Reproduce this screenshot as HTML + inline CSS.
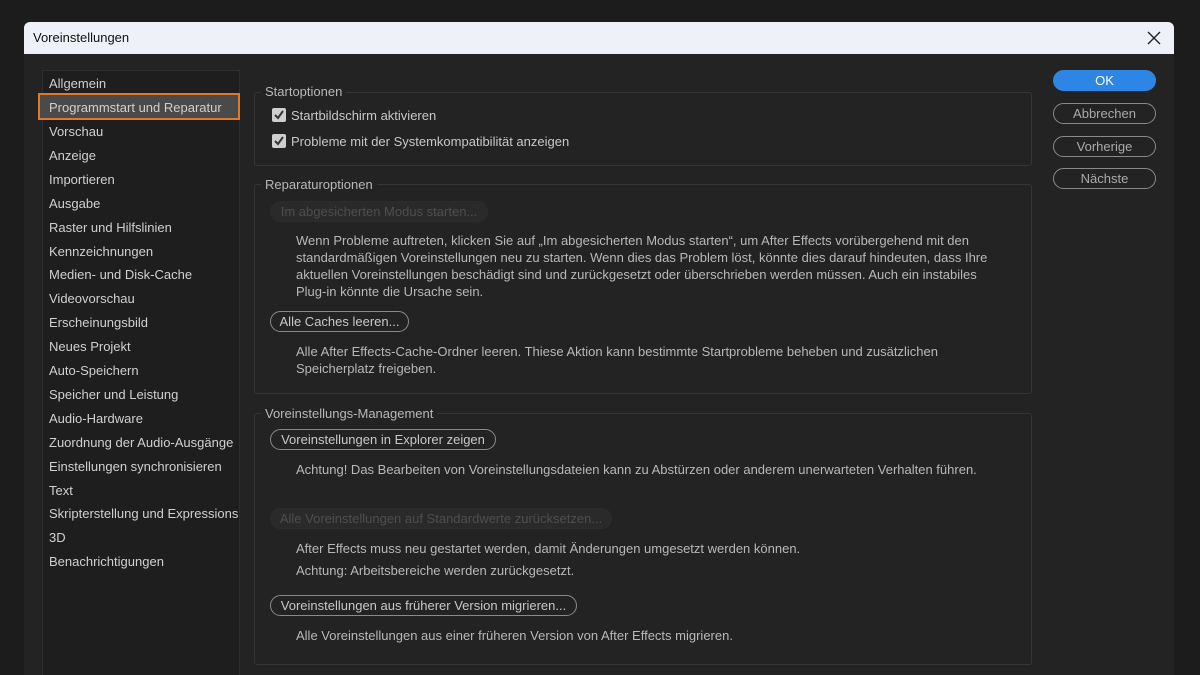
<!DOCTYPE html><html style="width:1200px;height:675px;overflow:hidden"><head><style>
body{margin:0;width:1200px;height:675px;background:#1c1c1c;font-family:"Liberation Sans",sans-serif;font-size:13px;color:#c8c8c8;overflow:hidden;position:relative}
.dlg{position:absolute;left:24px;top:22px;width:1150px;height:653px;background:#232323;border-radius:6px 6px 0 0;overflow:hidden}
.tb{position:absolute;left:0;top:0;width:1150px;height:32px;background:#eef2f8;color:#111;font-size:13px}
.a{position:absolute;white-space:nowrap}
.list{position:absolute;left:42px;top:70px;width:196px;height:605px;background:#1e1e1e;border:1px solid #2e2e2e;border-bottom:none}
.it{position:absolute;left:49px;font-size:13px;color:#d0d0d0}
.grp{position:absolute;left:254px;width:776px;border:1px solid #353535;border-radius:3px}
.gl{position:absolute;font-size:13px;color:#b8b8b8;background:#232323;padding:0 4px}
.btn{position:absolute;height:19px;border:1.5px solid #8a8a8a;border-radius:11px;color:#c8c8c8;font-size:13px;line-height:19px;text-align:center;box-sizing:content-box}
.dis{border-color:#2c2c2c;background:#2a2a2a;color:#4e4e4e}
.txt{position:absolute;left:296px;color:#b8b8b8;font-size:13px;line-height:17px}
.rb{position:absolute;left:1053px;width:101px;height:19px;border:1.5px solid #8a8a8a;border-radius:11px;text-align:center;line-height:19px;color:#aaa}
.cb{position:absolute;left:272px;width:14px;height:14px;background:#cfcfcf;border-radius:2px}
</style></head><body>
<div class="dlg"><div class="tb"><span class="a" style="left:9px;top:8px">Voreinstellungen</span>
<svg class="a" style="left:1123px;top:9px" width="14" height="14"><path d="M1 1L13 13M13 1L1 13" stroke="#222" stroke-width="1.4"/></svg></div></div>
<div class="list"></div>
<div class="a" style="top:93px;height:27px;background:#4a4a4a;border:2px solid #e07a2a;box-sizing:border-box;left:38px;width:202px"></div>
<div class="it" style="top:76px">Allgemein</div>
<div class="it" style="top:100px">Programmstart und Reparatur</div>
<div class="it" style="top:124px">Vorschau</div>
<div class="it" style="top:148px">Anzeige</div>
<div class="it" style="top:172px">Importieren</div>
<div class="it" style="top:196px">Ausgabe</div>
<div class="it" style="top:220px">Raster und Hilfslinien</div>
<div class="it" style="top:244px">Kennzeichnungen</div>
<div class="it" style="top:267px">Medien- und Disk-Cache</div>
<div class="it" style="top:291px">Videovorschau</div>
<div class="it" style="top:315px">Erscheinungsbild</div>
<div class="it" style="top:339px">Neues Projekt</div>
<div class="it" style="top:363px">Auto-Speichern</div>
<div class="it" style="top:387px">Speicher und Leistung</div>
<div class="it" style="top:411px">Audio-Hardware</div>
<div class="it" style="top:435px">Zuordnung der Audio-Ausgänge</div>
<div class="it" style="top:459px">Einstellungen synchronisieren</div>
<div class="it" style="top:483px">Text</div>
<div class="it" style="top:506px">Skripterstellung und Expressions</div>
<div class="it" style="top:530px">3D</div>
<div class="it" style="top:554px">Benachrichtigungen</div>

<div class="grp" style="top:92px;height:72px"></div><div class="gl" style="left:261px;top:84px">Startoptionen</div>
<div class="cb" style="top:108px"></div><svg class="a" style="left:273px;top:109px" width="12" height="12"><path d="M2 6L5 9L10 2" stroke="#333" stroke-width="2" fill="none"/></svg><span class="a" style="left:291px;top:108px">Startbildschirm aktivieren</span>
<div class="cb" style="top:134px"></div><svg class="a" style="left:273px;top:135px" width="12" height="12"><path d="M2 6L5 9L10 2" stroke="#333" stroke-width="2" fill="none"/></svg><span class="a" style="left:291px;top:134px">Probleme mit der Systemkompatibilität anzeigen</span>

<div class="grp" style="top:184px;height:208px"></div><div class="gl" style="left:261px;top:177px">Reparaturoptionen</div>
<div class="btn dis" style="left:270px;top:201px;width:216px">Im abgesicherten Modus starten...</div>
<div class="txt" style="top:232px">Wenn Probleme auftreten, klicken Sie auf „Im abgesicherten Modus starten“, um After Effects vorübergehend mit den<br>standardmäßigen Voreinstellungen neu zu starten. Wenn dies das Problem löst, könnte dies darauf hindeuten, dass Ihre<br>aktuellen Voreinstellungen beschädigt sind und zurückgesetzt oder überschrieben werden müssen. Auch ein instabiles<br>Plug-in könnte die Ursache sein.</div>
<div class="btn" style="left:270px;top:311px;width:137px">Alle Caches leeren...</div>
<div class="txt" style="top:343px">Alle After Effects-Cache-Ordner leeren. Thiese Aktion kann bestimmte Startprobleme beheben und zusätzlichen<br>Speicherplatz freigeben.</div>

<div class="grp" style="top:413px;height:250px"></div><div class="gl" style="left:261px;top:406px">Voreinstellungs-Management</div>
<div class="btn" style="left:270px;top:429px;width:224px">Voreinstellungen in Explorer zeigen</div>
<div class="txt" style="top:461px">Achtung! Das Bearbeiten von Voreinstellungsdateien kann zu Abstürzen oder anderem unerwarteten Verhalten führen.</div>
<div class="btn dis" style="left:270px;top:508px;width:340px">Alle Voreinstellungen auf Standardwerte zurücksetzen...</div>
<div class="txt" style="top:540px">After Effects muss neu gestartet werden, damit Änderungen umgesetzt werden können.</div>
<div class="txt" style="top:562px">Achtung: Arbeitsbereiche werden zurückgesetzt.</div>
<div class="btn" style="left:270px;top:595px;width:305px">Voreinstellungen aus früherer Version migrieren...</div>
<div class="txt" style="top:627px">Alle Voreinstellungen aus einer früheren Version von After Effects migrieren.</div>

<div class="rb" style="top:70px;background:#2d86e6;border-color:#2d86e6;color:#fff">OK</div>
<div class="rb" style="top:103px">Abbrechen</div>
<div class="rb" style="top:136px">Vorherige</div>
<div class="rb" style="top:168px">Nächste</div>
</body></html>
